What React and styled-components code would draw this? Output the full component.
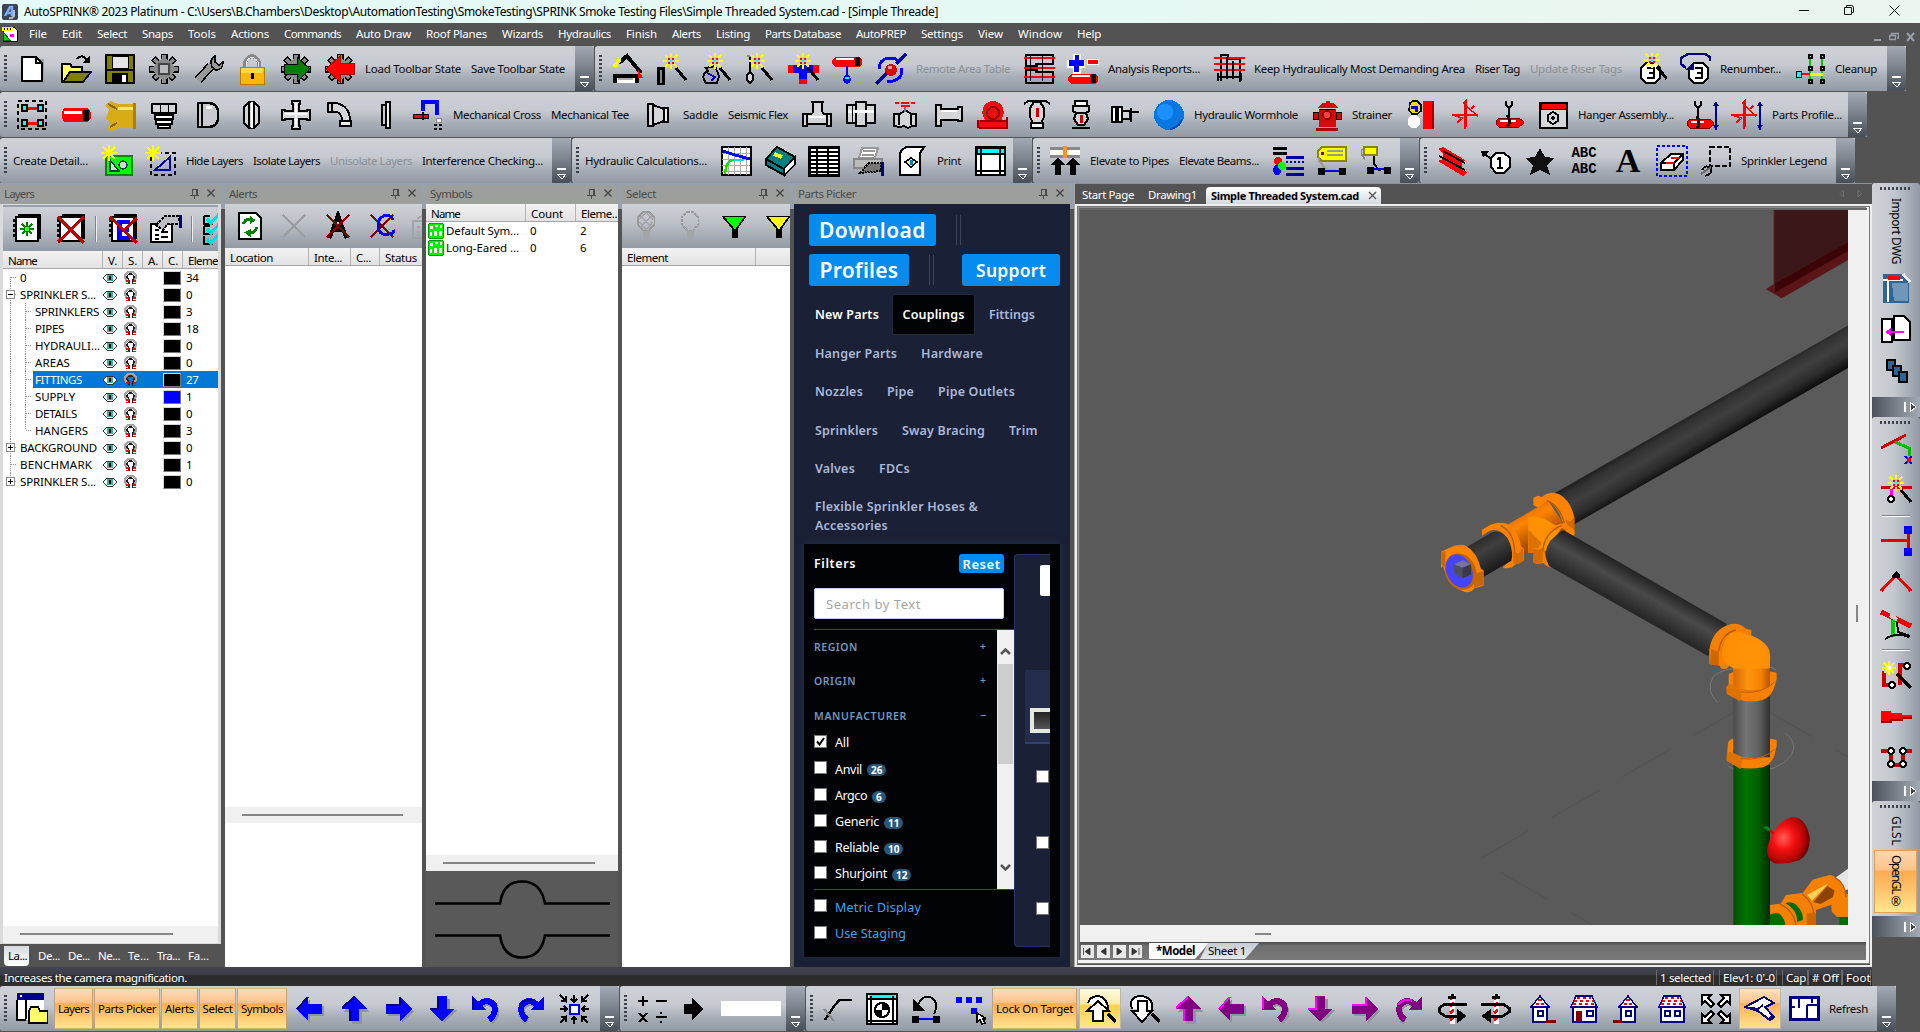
import React, { useLayoutEffect, useRef, useState } from 'react';
import styled, { createGlobalStyle, css } from 'styled-components';

const UI = "'Noto Sans', 'Open Sans', sans-serif";

const Global = createGlobalStyle`
  * { box-sizing: border-box; }
  html, body { margin: 0; padding: 0; }
  body { font: 11.5px/1 ${UI}; background: #535353; overflow: hidden; color: #000; }
`;

/* ---------- text with a known advance width ---------- */
const FitSpan = styled.span`
  display: inline-block;
  white-space: pre;
  flex: none;
  justify-self: start;
  align-self: ${(p) => (p.$top ? 'flex-start' : 'center')};
  line-height: 16px;
`;
function Fit({ w, vertical, top, children, className }) {
  const ref = useRef(null);
  const [spacing, setSpacing] = useState(0);
  useLayoutEffect(() => {
    const box = ref.current.getBoundingClientRect();
    const natural = vertical ? box.height : box.width;
    setSpacing((w - natural) / children.length);
  }, []);
  return <FitSpan ref={ref} $top={top} className={className} style={{ letterSpacing: spacing }}>{children}</FitSpan>;
}

/* ---------- icon drawings: [path, fill, stroke, stroke width] ---------- */
const K = '#000';
const G = '#c8cacf';
const BODY = '#d4d6da';
const star = (x, y) => [
  [`M${x} ${y - 8}v4M${x} ${y + 4}v4M${x - 8} ${y}h4M${x + 4} ${y}h4M${x - 6} ${y - 6}l3 3M${x + 3} ${y + 3}l3 3M${x + 6} ${y - 6}l-3 3M${x - 3} ${y + 3}l-3 3`, 'none', '#ff0', 2],
  [`M${x - 3} ${y - 3}h2v2h-2zM${x + 1} ${y - 3}h2v2h-2zM${x - 3} ${y + 1}h2v2h-2zM${x + 1} ${y + 1}h2v2h-2z`, 'red', '-'],
  [`M${x - 1} ${y - 1}h2v2h-2z`, '#0ff', '-'],
];
const rays = (x, y) => [[`M${x} ${y - 8}v16M${x - 8} ${y}h16M${x - 6} ${y - 6}l12 12M${x + 6} ${y - 6}l-12 12`, 'none', '#ff0', 2]];
const wand = (x, y) => [...star(x, y), [`M${x + 5} ${y + 7}L${x + 15} ${y + 19}`, 'none', K, 3]];
const gearBase = [
  ['M16 1v30M1 16h30M5.5 5.5l21 21M26.500 5.500l-21 21', 'none', K, 7],
  ['M16 2v28M2 16h28M6.500 6.500l19 19M25.500 6.500l-19 19', 'none', '#8b8b8b', 4],
  ['M16 6a10 10 0 1 0 .1 0z', '#8b8b8b', '-'],
];
const arrowSet = (fill, edge) => ({
  left: [['M4 18L16 6v7h14v10H16v8z', '#8f959d', '-'], ['M2 16L14 3v8h14v10H14v7z', fill, '-'], ['M3 16L14 4', 'none', edge, 2]],
  up: [['M18 6l14 13h-8v12h-10v-12h-8z', '#8f959d', '-'], ['M16 3l13 13h-8v12H11V16H3z', fill, '-'], ['M4 15L16 4M12 16v12', 'none', edge, 2]],
  right: [['M32 18L20 31v-8H6v-10h14v-6z', '#8f959d', '-'], ['M30 16L18 28v-7H4V11h14V3z', fill, '-'], ['M4 12h14V4', 'none', edge, 2]],
  down: [['M18 30l14-13h-8V6h-10v12h-8z', '#8f959d', '-'], ['M16 28l13-12h-8V3H11v13H3z', fill, '-'], ['M12 4v12H4', 'none', edge, 2]],
  ccw: [['M10 14q8-8 15 0q4 8-4 15', 'none', '#8f959d', 6], ['M9 12q8-8 15 0q3 9-5 15', 'none', fill, 6], ['M2 3v14h14z', fill, '-'], ['M3 4v12', 'none', edge, 2]],
  cw: [['M24 14q-8-8-15 0q-4 8 4 15', 'none', '#8f959d', 6], ['M23 12q-8-8-15 0q-3 9 5 15', 'none', fill, 6], ['M30 3v14H16z', fill, '-'], ['M6 12q6-8 14-4', 'none', edge, 2]],
});
const blue = arrowSet('#00f', '#000080');
const purple = arrowSet('#800080', '#f0f');

const sheet = [['M6 4h22v24H6z', '#fff', K, 2], ['M8 2h22v24', 'none', K, 2], ['M6 7H3M6 12H3M6 17H3M6 22H3', 'none', K, 3]];
const cross = (c) => [['M4 4l24 24M28 4L4 28', 'none', c, 3]];
const badge3 = [['M11 10h9l5 5v10l-5 5h-9l-5-5V15z', '#fff', K, 2], ['M12 15h7v10h-7m2-5h5', 'none', K, 2]];
const house = (front) => [
  front ? ['M3 14l5-11h16l5 11z', '#fff', '#000080', 1.5] : ['M7 14l9-11 9 11z', '#fff', '#000080', 1.5],
  front ? ['M9 5h14M6 8h20M5 11h22', 'none', 'red', 2, '3 3'] : ['M14 7h4M12 11h3m2 0h3', 'none', 'red', 2],
  front ? ['M5 14h23v15H5z', '#fff', '#000080', 2] : ['M9 14h14v15H9z', '#fff', '#000080', 2],
];
const pipeRed = (y) => [[`M4 ${y - 4}h24l3 3v4l-3 3H4l-3-3v-4z`, 'red', '-'], [`M5 ${y - 2}h18`, 'none', '#fff', 2], [`M24 ${y - 4}h5v9h-5z`, K, '-']];
const nodes = (y) => [[`M6 ${y}h20`, 'none', '#00f', 2], [`M2 ${y - 3}h7v7H2zM23 ${y - 3}h7v7h-7z`, K, '-']];
const funnel = (c) => [['M2 5h26L18 19v10h-4V19z', c, K, 2], ['M1 5h28', 'none', K, 2], ['M16 19v10', 'none', K, 4]];

const ICONS = {
  new: [['M8 6h20v24H8z', '#9a9fa6', '-'], ['M6 4h14l6 6v18H6z', '#fff', K, 2.5], ['M20 4v6h6']],
  open: [['M2 11h8l2 3h10v14H2z', '#ff6', K, 2], ['M10 19h21l-8 10H3z', '#808000', K, 2], ['M17 6q5-6 10 1', 'none', K, 2], ['M30 2v8h-8z', K, '-']],
  save: [['M2 2h28v28H2z', '#808000', K, 2.5], ['M8 3h16v12H8z', '#e4e4e4', K, 1], ['M8 20h16v10H8z', K, '-'], ['M18 22h4v7h-4z', '#fff', '-'], ['M3 17h26', 'none', K, 2]],
  gear: [...gearBase, ['M11 11h10v10H11z', '#b8babd', '#444', 2]],
  wrench: [['M6 27L19 13', 'none', K, 9], ['M6 27L20 12', 'none', '#999', 6], ['M20 14q-3-8 3-11v6l4 3 4-3q0 8-7 8z', '#999', K, 1.5]],
  lock: [['M9 16V9q7-12 14 0v7', 'none', '#888', 4], ['M10 14V9q6-9 12 0v5', 'none', '#ddd', 1], ['M4 14h24v17H4z', '#fbb80a', '#b97a00', 1], ['M5 15h22v5H5z', '#ffd84a', '-'], ['M16 20v6', 'none', K, 3]],
  ggear: [...gearBase, ['M4 11h13V4l13 12-13 13v-8H4z', '#008000', K, 1]],
  rgear: [...gearBase, ['M30 10H16V3L2 16l14 13v-8h14z', 'red', '#a00', 1]],
  crane: [['M4 30v-7h22v7', '#fff', K, 3.5], ['M7 26h15', 'none', '#aaa', 2], ['M8 10l8-7 14 17', 'none', K, 4], ['M3 14l6-8', 'none', '#ff0', 4], ['M27 16l5 9h-5z', 'red', '-']],
  wellbow: [['M3 15h5v16H3z', '#888', K, 3], ...wand(16, 8)],
  wturn: [['M7 30q-6-8 2-12l-2-3 9-2 4 10-2 7z', '#aaa', K, 2], ['M8 20l8 4-4 4', 'none', '#00a', 2], ...wand(16, 8)],
  wdrop: [['M7 2v18', 'none', K, 2], ['M7 19q7 6 0 11q-7-5 0-11z', BODY, K, 2], ['M4 3h6', 'none', '#888', 2], ...wand(14, 8)],
  wtee: [['M1 12h31v8H1z', 'red', '-'], ['M6 12h20v8H6z', '#00f', '-'], ['M12 18h8v8h-8z', '#00f', '-'], ['M12 26h8v5h-8z', 'red', '-'], ...wand(16, 8)],
  head: [...pipeRed(8), ['M16 13v9', 'none', '#00f', 2], ['M16 20q8 8 0 11q-8-3 0-11z', '#00f', '-'], ['M14 25h4', 'none', '#0ff', 2]],
  orbit: [['M31 1L21 11M1 31l12-12', 'none', '#00a', 4], ['M4 16q0-9 9-11h6l6 4M26 15q3 10-8 13h-6', 'none', '#00f', 3], ['M16 11a6 6 0 1 0 .1 0z', '#d00', '-'], ['M13 13h4v3h-4z', '#f99', '-']],
  stairs: [['M3 2h27v9H13v8h17v11H3V17h11v-4H3z', 'none', K, 2], ['M1 5h31M1 15h31M1 24h31', 'none', 'red', 2], ['M7 3v25M19 3v25', 'none', K, 1]],
  plusminus: [['M6 1h8v6h4v8h-4v6H6v-6H0V7h6z', '#fff', '-'], ['M8 2h4v5h5v6h-5v6H7v-6H2V7h6z', '#00f', '-'], ['M20 6h11v5H20z', 'red', '#fff', 1], ...pipeRed(25)],
  grate: [['M8 28V2h7v4h12v23', 'none', K, 2], ['M1 5h31M1 11h31M1 17h31', 'none', 'red', 2], ['M4 24h24M5 20v8M28 20v8M14 4v22M20 8v18', 'none', K, 2]],
  tag: [...badge3, ...wand(17, 7)],
  renum: [['M15 10h9l5 5v10l-5 5h-9l-5-5V15z', '#fff', K, 2], ['M16 15h7v10h-7m2-5h5', 'none', K, 2], ['M31 8V4L26 1H9L2 5v6l5 4', 'none', '#000080', 2.5], ['M15 8v9H7z', '#000080', '-']],
  cleanup: [['M16 5v22M28 5v22', 'none', '#0c0', 2], ['M4 21h12', 'none', 'red', 2], ['M16 21h13', 'none', '#ff0', 3], ['M2 18h5v6H2z', '#0ff', K, 1], ['M15 2h3v3h-3zM27 2h3v3h-3zM15 14h3v3h-3zM27 14h3v3h-3zM15 27h3v3h-3zM27 27h3v3h-3z', '#fff', K, 1.5]],

  riser: [['M2 2h28v28H2z', 'none', K, 2, '4 3'], ['M8 9h16M8 24h16', 'none', 'red', 3], ['M6 6h5v6H6zM22 6h5v6h-5zM6 21h5v6H6zM22 21h5v6h-5z', '#0ff', K, 1.5]],
  pipe: [['M4 9h22q5 0 5 7t-5 7H4q-4-7 0-14z', 'red', '-'], ['M4 13h18', 'none', '#fff', 3], ['M23 11h6v11h-6z', K, '-']],
  tee: [['M14 5h16v24H14q-3 4-10 2l1-8-3-3 3-9-4-5 6-4z', '#d9ab16', '-'], ['M14 9h15', 'none', '#ffe46a', 3], ['M30 4v26', 'none', '#ad8000', 3], ['M4 5l9 5M6 28l7-4', 'none', '#8c6900', 2]],
  plug: [['M4 5h24v9H4z', BODY, K, 2], ['M7 16h18v4H7zM8 21h16v4H8zM10 26h12v3H10z', '#fff', K, 2], ['M12 6v8M20 6v8', 'none', K, 1]],
  cap: [['M6 4h10q9 0 10 8v8q-1 8-10 8H6z', G, K, 2.5], ['M10 5v22', 'none', K, 1.5], ['M14 8h6', 'none', '#fff', 3]],
  union: [['M13 3h5l5 5v16l-5 5h-5l-5-5V8z', BODY, K, 2], ['M13 2v28M18 2v28', 'none', K, 1.5], ['M16 3v26', 'none', '#fff', 2]],
  cross: [['M12 2h8v3h-1v7h8v-1h3v10h-3v-1h-8v7h1v3h-8v-3h1v-7H5v1H2V11h3v1h8V5h-1z', BODY, K, 2], ['M16 4v24M5 15h22', 'none', '#fff', 2]],
  elbow: [['M4 4h8q14 3 14 18h-8q0-9-7-9H4z', BODY, K, 2], ['M16 22h11v5H16z', '#eee', K, 2], ['M8 3v10', 'none', K, 1.5]],
  flange: [['M14 6h4v20h-4z', G, K, 2], ['M18 3h4v26h-4z', '#eee', K, 2]],
  uturn: [['M11 12V3h14v13', 'none', '#00f', 4], ['M1 15h15v4H1z', 'red', K, 1], ['M11 13v8', 'none', K, 2], ['M24 19h5v4h-5z', '#eee', '#888', 1], ['M22 26h8M22 30h8', 'none', K, 2, '3 2']],
  reducer: [['M6 5h5v22H6z', BODY, K, 2], ['M11 6l11 4v12l-11 4z', BODY, K, 2], ['M22 9h4v14h-4z', '#eee', K, 2]],
  teefit: [['M2 15h8q2 0 2-5V3h9v7q0 5 3 5h6v12h-4v-2H6v2H2z', BODY, K, 2], ['M10 3h13M6 15v10M26 15v10', 'none', K, 2], ['M8 18h16', 'none', '#fff', 2]],
  coupling: [['M2 6h9v18H2zM21 6h9v18h-9z', BODY, K, 2], ['M11 3h10v24H11z', BODY, K, 2], ['M3 12h26', 'none', '#fff', 3], ['M7 7v17', 'none', K, 1]],
  valve: [['M5 15h6l4-3h3l4 3h5v12h-4l-4 2-4-2-4 1-6-1z', BODY, K, 2], ['M16 6v7', 'none', '#777', 2], ['M6 4h4m2 0h8m2 0h4', 'none', 'red', 2], ['M12 7h9', 'none', 'red', 2], ['M10 16v10M22 16v10', 'none', K, 1.5]],
  nipple: [['M3 6h5v4h17V8h4v14h-4v-1H8v6H3z', BODY, K, 2], ['M8 12h16', 'none', '#fff', 2]],
  pump: [['M7 6q9-8 18 0l2 8-3 8h6v7H1v-8h7l-3-7z', '#ea1010', '-'], ['M16 8a6 6 0 1 0 .1 0z', 'none', '#900', 2], ['M2 29h28M3 22h26M1 21v8M30 18v12', 'none', '#900', 2]],
  pendent: [['M3 5l4-3h18l4 3', 'none', K, 2], ['M13 3h6l4 6v9l-3 6h-8l-3-6V9z', BODY, K, 2], ['M10 24h12v5H10z', '#fff', K, 2], ['M16 9v9', 'none', '#c00', 3]],
  upright: [['M10 2h12v5H10z', '#fff', K, 2], ['M8 7h16v5l-3 2h-10l-3-2z', BODY, K, 2], ['M11 14h10l2 6-4 6h-6l-4-6z', BODY, K, 2], ['M16 16v8', 'none', '#c00', 3], ['M7 29h18', 'none', K, 2]],
  sidewall: [['M3 8h4v15H3zM9 8h4v15H9z', '#fff', K, 2], ['M13 12h8v8h-8z', BODY, K, 2], ['M21 13h9M22 9v14', 'none', K, 2]],
  sphere: [['M16 1a15 15 0 1 0 .1 0z', '#0878e0', '-'], ['M12 5a8 8 0 1 0 .1 0z', '#1c90ff', '-'], ['M29 20q-4 9-12 10', 'none', '#0050b0', 2]],
  hydrant: [['M11 4h4V2h4v2h4l4 5H6zM8 10h17v18H8z', '#d80808', '-'], ['M2 13h5v7H2zM25 13h5v7h-5z', '#d80808', K, 1], ['M16 12a4 4 0 1 0 .1 0z', '#ff4040', '#800', 2], ['M5 30h22', 'none', '#a00', 3], ['M8 10h16', 'none', K, 1]],
  riserv: [['M18 2h9v28h-9z', 'red', '-'], ['M28 2v28', 'none', '#900', 2], ['M5 4l3-2h4l4 4v6l-4 3H7l-3-4z', '#e8e000', K, 1.5], ['M6 8h5v5', 'none', '#00f', 3], ['M3 19l4-3h5l3 4v6l-4 3H6l-3-3z', '#fff', '-']],
  axes: [['M16 3v27M3 16h26', 'none', 'red', 2], ['M3 16l11 3M18 8l11 9M14 5l3-3v26', 'none', 'red', 1.5], ['M8 24l4-4M22 10l3-3', 'none', 'red', 1.5]],
  hanger: [['M13 2v4l3 3 3-3V2M16 9v12', 'none', K, 2], ['M6 19h20l4 3v3l-4 3H6l-3-3v-3z', 'red', '#700', 1], ['M7 22h16', 'none', '#fff', 2], ['M14 16q5 7 0 12', 'none', K, 3]],
  detail: [['M3 4h27v25H3z', BODY, K, 2], ['M4 4h25v6H4z', 'red', K, 1], ['M16 13l5 3v6l-5 3-5-3v-6zM16 17v4M14 19h4', 'none', K, 2]],
  hangerdim: [['M8 2v4l3 3 3-3V2M11 9v12', 'none', K, 2], ['M3 20h20l3 3v3l-3 3H3l-3-3v-3z', 'red', '#700', 1], ['M4 23h13', 'none', '#fff', 2], ['M10 17q4 7 0 12', 'none', K, 3], ['M29 3v28', 'none', '#0000a0', 2], ['M26 7l3-5 3 5zM26 26l3 5 3-5z', '#0000a0', '-']],
  axesdim: [['M13 3v27M0 16h26', 'none', 'red', 2], ['M0 16l11 3M15 8l10 9M11 5l3-3v26', 'none', 'red', 1.5], ['M5 24l4-4M19 10l3-3', 'none', 'red', 1.5], ['M29 3v28', 'none', '#0000a0', 2], ['M26 7l3-5 3 5zM26 26l3 5 3-5z', '#0000a0', '-']],

  detnew: [['M5 11h26v19H5z', '#0f0', '#080', 2], ['M9 15v11h9zM22 16a4 4 0 1 0 .1 0z', BODY, '#044', 1.5], ...rays(8, 8)],
  detsel: [['M6 8h24v22H6z', 'none', K, 2, '4 3'], ['M10 25l15-13v13z', 'none', '#0000a0', 2], ...rays(8, 8)],
  graph: [['M2 2h29v28H2z', '#fff', K, 2], ['M8 2v28M14 2v28M20 2v28M26 2v28M2 8h28M2 14h28M2 20h28M2 26h28', 'none', '#aaa', 1], ['M3 6l12 4 15 4', 'none', '#00f', 3], ['M5 29q1-14 9-14', 'none', '#0e0', 2.5], ['M14 15h10', 'none', '#0dd', 2]],
  book: [['M2 14L13 2l18 10-11 12z', '#008080', K, 2], ['M20 24l11-12v7L21 30z', '#fff', K, 1.5], ['M2 14v6l18 10v-6z', '#008080', K, 2], ['M10 9l8 3', 'none', '#ff0', 4]],
  table: [['M1 2h30v28H1z', '#fff', K, 3], ['M2 7h28M2 11h28M2 15h28M2 19h28M2 23h28M2 27h28', 'none', K, 2], ['M9 2v28M20 2v28', 'none', K, 2]],
  printer: [['M10 3h16l-3 10H7z', '#fff', '#999', 2], ['M11 6h12M10 10h12', 'none', '#999', 1.5], ['M2 14h28v9H2z', '#bbb', '#888', 2], ['M8 28l9-10h12v8z', '#777', K, 2, '2 1'], ['M29 17h3v14h-3z', '#000080', '-']],
  eyepage: [['M6 5l4-3h18l-4 6v22H4V8z', '#fff', K, 2], ['M9 17l6-4 6 4-6 5z', '#ff8', K, 1.5], ['M15 15v5', 'none', '#088', 3]],
  layout: [['M2 2h29v28H2z', '#fff', K, 2.5], ['M3 3h27v5H3z', '#0ff', K, 1], ['M7 3v27M26 3v27M3 9h27M3 26h27', 'none', K, 2]],
  elevate: [['M1 3h30', 'none', '#888', 3], ['M1 7h30', 'none', '#fff', 5], ['M1 11h30', 'none', '#888', 3], ['M16 1v12', 'none', '#ff9020', 4], ['M9 12l7 8h-4v10H6V20H2zM24 12l7 8h-4v10h-6V20h-4z', K, '-']],
  legend: [['M1 3h14M1 8h14', 'none', K, 3], ['M6 12a4 4 0 1 0 .1 0z', 'red', '-'], ['M5 20a4 5 0 1 0 .1 0z', '#00f', '-'], ['M10 17a4 4 0 1 0 .1 0z', '#0f0', '-'], ['M14 12h18M14 23h18M14 29h18', 'none', '#0000a0', 3], ['M14 17h18', 'none', '#0000a0', 2, '2 2']],
  label: [['M6 2h24v14H6l-4-4V6z', '#ff0', '#880', 1.5], ['M11 6h16M11 10h16', 'none', '#999', 2], ['M5 8h3', 'none', '#800', 3], ['M3 12v4l7 8', 'none', '#999', 2], ...nodes(26)],
  label2: [['M4 2h13v8H4z', '#ff0', '#880', 1.5], ['M14 11v8l6 7', 'none', K, 2], ['M2 4q-2 6 3 10', 'none', '#888', 1.5], ['M8 24h22', 'none', '#00f', 2], ['M7 22h7v7H7zM24 22h7v7h-7z', K, '-']],
  beam: [['M2 4l5-2 22 13-3 4v6l5 2-4 4L2 16l5-2v-6z', 'red', '-'], ['M3 11l26 14M7 6l22 12', 'none', K, 2]],
  num1: [['M16 8h8l6 5v9l-6 6h-8l-5-6v-9z', '#fff', K, 2], ['M17 14l3-1v10m-3 0h6', 'none', K, 2], ['M12 14L4 9', 'none', K, 2], ['M1 6h8l-6 6z', K, '-']],
  star: [['M16 3l5 9 10 1-8 7 3 10-10-5-10 5 3-10-8-7 10-1z', '#111', '-']],
  slab: [['M1 1h30v30H1z', 'none', '#00f', 2, '3 2'], ['M5 18l10-9h12v6L18 25H5z', '#fff', K, 2], ['M5 18h13l9-9M18 18v7', 'none', K, 2], ['M10 18h8M15 13h8', 'none', 'red', 2]],
  cloud: [['M10 2h20v19H10z', 'none', K, 2, '5 2'], ['M2 25q3-6 9-2 2 6-6 8', 'none', K, 2], ['M1 29l10-7', 'none', '#666', 2]],

  layNew: [...sheet, ['M17 9v14M10 16h14M12 11l10 10M22 11L12 21', 'none', '#008000', 1.5], ['M15 14h4v4h-4z', '#3f3', '-']],
  layDel: [...sheet, ['M4 4l26 26M30 4L4 29', 'none', '#c00000', 3]],
  layE: [['M6 4h22v24H6z', '#fff', K, 2], ['M8 2h22v24', 'none', K, 2], ['M6 7H3M6 12H3M6 17H3M6 22H3', 'none', K, 3], ['M11 7h13v4h-8v4h7v4h-7v4h8v4H11z', '#00f', '-'], ['M4 4l27 26M31 5L17 18', 'none', '#c00000', 3]],
  props: [['M1 11h21v18H1z', '#fff', K, 2], ['M5 17h4M5 22h4M5 26h4M11 19h7M11 24h7', 'none', K, 1.5], ['M6 12l9-9h13l2 8H18l-5 6z', '#bcbec2', K, 2, '3 1'], ['M29 2h3v13h-3z', '#000080', '-']],
  checks: [['M2 3h6M2 3v8h9M2 13h6M2 13v8h9M2 23v8h9', 'none', K, 2], ['M5 6l4 4 8-9M5 16l4 4 8-9M5 26l4 4 8-9', 'none', '#0dd', 3]],
  refresh: [['M4 2h18l6 6v22H4z', '#fff', K, 2.5], ['M9 14q1-6 9-5M23 17q-1 7-8 6', 'none', '#008000', 3], ['M16 5l6 5-6 4zM17 19l-7 4 7 5z', '#008000', '-']],
  xgrey: cross('#9a9da2'),
  xa: [['M7 29L16 4l9 25M10 20h13', 'none', K, 4], ...cross('#800000')],
  xc: [...cross('#800000'), ['M27 10q0-7-9-5-7 3-6 12t10 8 6-5', 'none', '#00f', 3]],
  propsGrey: [['M2 11h21v18H2z', 'none', '#a0a3a8', 2], ['M6 17h4M6 22h4M6 26h4M12 19h7M12 24h7M6 8l10-5h10', 'none', '#a0a3a8', 2]],
  bulb1: [['M12 1h6l6 6v7l-6 7h-6l-6-7V7z', 'none', '#999', 2], ['M9 5l12 12M21 5L9 17M15 2l7 7M15 2L8 9M8 12l7 8 7-8', 'none', '#a2a4a8', 1.5], ['M12 21h7v8l-3 2-4-2z', '#a2a4a8', '-']],
  bulb2: [['M12 1h6l6 6v7l-6 7h-6l-6-7V7z', 'none', '#999', 2, '3 1'], ['M12 21h7v8l-3 2-4-2z', '#a2a4a8', '-']],
  funG: funnel('#0f0'),
  funY: funnel('#ff0'),

  win: [['M1 1h27v26H1z', '#fff', '-'], ['M1 7v20h9', 'none', K, 2], ['M10 7v19', 'none', K, 2], ['M1 0h27v7H1z', '#000080', '-'], ['M4 3h2', 'none', '#fff', 2], ['M15 14h7l2 4h8v12H13V18z', '#ff6', K, 1.5]],
  center: [['M12 12h9v9h-9z', '#fff', '#00f', 2], ['M16 2v8M16 23v8M2 16h7M23 16h8', 'none', K, 2], ['M13 6l3 3 3-3M13 27l3-3 3 3M6 13l3 3-3 3M27 13l-3 3 3 3', 'none', K, 2], ['M2 2l6 6V3M8 8H3M30 2l-6 6V3M24 8h5M2 30l6-6v5M8 24H3M30 30l-6-6v5M24 24h5', 'none', K, 2]],
  calc: [['M2 8h10M7 3v10M20 8h11M3 20l8 9M11 20l-8 9M20 24h11M25 19v2M25 28v2', 'none', K, 2]],
  go: [['M4 11h8V5l11 11-11 11v-6H4z', K, '-']],
  curve: [['M3 27q12-19 15-20h12', 'none', K, 2.5], ['M2 16l10 12', 'none', '#888', 2]],
  target: [['M1 1h30v30H1z', '#fff', K, 2.5], ['M3 3h26', 'none', '#0ff', 3], ['M5 3v28M27 3v28M2 6h28M2 28h28', 'none', K, 1.5], ['M16 10a7 7 0 1 0 .1 0z', 'none', K, 2], ['M16 10v7h7a7 7 0 0 0-7-7zM16 17H9a7 7 0 0 0 7 7z', K, '-']],
  back: [['M8 12q4-10 12-8 10 5 4 17', 'none', K, 2], ['M3 6v12h12z', K, '-'], ...nodes(26)],
  pick: [['M2 4h6v6H2zM12 4h6v6h-6zM22 4h6v6h-6zM17 15h6v6h-6z', '#00f', '-'], ['M23 20v9l3-2 2 4 3-1-2-4h4z', '#fff', K, 1.5]],
  zin: [['M4 10q3-9 14-6 8 6 5 14', '#fff', K, 2], ['M24 21l8 8', 'none', K, 4], ['M14 8L3 18h6v10h10V18h6z', '#fff', K, 2]],
  zout: [['M4 16Q0 3 14 3q12 2 10 15', '#fff', K, 2], ['M24 21l8 8', 'none', K, 4], ['M10 8v10H4l10 11 10-11h-5V8z', '#fff', K, 2]],
  rotl: [['M16 1v30', 'none', '#fff', 5], ['M14 6l4-3m-4 10l4-3m-4 10l4-3m-4 10l4-3', 'none', 'red', 3], ['M31 11H9l-6 4v4l6 4h14', 'none', K, 3], ['M21 16v14l10-7z', K, '-'], ['M12 4h8M16 1v5', 'none', K, 3]],
  rotr: [['M16 1v30', 'none', '#fff', 5], ['M14 6l4-3m-4 10l4-3m-4 10l4-3m-4 10l4-3', 'none', 'red', 3], ['M1 11h22l6 4v4l-6 4H9', 'none', K, 3], ['M11 16v14L1 23z', K, '-'], ['M12 4h8M16 1v5', 'none', K, 3]],
  h1: [...house(false), ['M14 18h5v5h-5z', '#fff', '#000080', 2], ['M22 28h10', 'none', '#800000', 3]],
  h2: [...house(true), ['M8 18h6v11H8z', '#800000', '-'], ['M19 18h6v5h-6z', '#fff', '#000080', 2]],
  h3: [...house(false), ['M14 18h5v5h-5z', '#fff', '#000080', 2], ['M1 28h9', 'none', '#800000', 3]],
  h4: [...house(true), ['M9 18h5v5H9zM19 18h5v5h-5z', '#fff', '#000080', 2]],
  extents: [['M2 2h9l-3 3 6 6-3 3-6-6-3 3zM30 2h-9l3 3-6 6 3 3 6-6 3 3zM2 30h9l-3-3 6-6-3-3-6 6-3-3zM30 30h-9l3-3-6-6 3-3 6 6 3-3z', '#fff', K, 2]],
  view3d: [['M1 14L20 4l10 6-9 4 8 9-5 3-10-8z', '#fff', '#000080', 2], ['M1 14l13 2 5-4M14 18l12 9 5-3', 'none', '#000080', 2]],
  plan: [['M2 4h28v22H2z', '#fff', '#000080', 3], ['M11 4v11M2 14h5M19 12h11M19 12v14M24 4v6', 'none', '#000080', 2]],

  dwg: [['M3 2h18l8 8v21H3z', '#2d6596', '-'], ['M12 11h16v18H14z', '#7096b8', '-'], ['M8 8v22M3 8h20', 'none', '#fff', 2], ['M8 4h12v4H8z', 'red', '-'], ['M23 2l7 8', 'none', '#eee', 3]],
  copy: [['M2 5h10v23H2z', '#fff', K, 2], ['M14 2h10l6 6v18H14z', '#fff', K, 2], ['M6 18h18', 'none', '#f0f', 2], ['M5 18l6-4v8z', '#f0f', '-']],
  boxes: [['M7 4h8v10H7z', '#2d6596', K, 2], ['M13 10h8v10h-8z', '#2d6596', K, 2], ['M19 16h8v10h-8z', '#2d6596', K, 2]],
  v1: [['M1 15L26 2', 'none', '#c00', 3], ['M15 9l14 6v8', 'none', '#0b0', 3], ['M25 23l7 8M32 23l-7 8', 'none', '#00f', 2], ['M27 25h4v4h-4z', 'red', '-']],
  v2: [['M1 12h31', 'none', '#c00', 3], ['M11 13v8', 'none', '#f0f', 3], ['M11 21a3 3 0 1 0 .1 0z', '#fff', K, 2], ...wand(16, 8)],
  v3: [['M1 15h27M28 4v22', 'none', '#d00', 3], ['M24 1h8v8h-8zM24 23h8v8h-8z', '#00f', '-']],
  v4: [['M1 24L16 8l15 16', 'none', '#e00', 3], ['M12 8l4-4 4 4v3h-8z', K, '-']],
  v5: [['M1 3l30 14', 'none', '#e00', 5], ['M10 6l7 5', 'none', '#ccc', 4], ['M13 11v17', 'none', '#0c0', 4], ['M17 13l1 10 12 4M5 30q10-7 24-2', 'none', K, 2]],
  v6: [['M4 12v14h6M20 26V6h7', 'none', '#c00', 4], ['M12 23a3 3 0 1 0 .1 0zM27 4a3 3 0 1 0 .1 0z', '#fff', K, 2], ['M17 15l14 14', 'none', K, 4], ['M9 2v14M2 9h14M4 4l10 10M14 4L4 14', 'none', '#ff0', 2], ['M7 7h4v4H7z', '#fff', '-']],
  v7: [['M1 10h10v2h11v2h10v3H22v2H11v2H1z', '#f00', '-'], ['M1 21h10v-2h11v-2h10', 'none', '#900', 2]],
  v8: [['M1 8h10v14h12V8h9', 'none', '#c00', 4], ['M11 5a3 3 0 1 0 .1 0zM23 5a3 3 0 1 0 .1 0zM11 18a3 3 0 1 0 .1 0zM23 18a3 3 0 1 0 .1 0z', '#fff', K, 2]],
  ...Object.fromEntries(Object.entries(blue).map(([k, v]) => ['b_' + k, v])),
  ...Object.fromEntries(Object.entries(purple).map(([k, v]) => ['p_' + k, v])),
};

const Svg = styled.svg`
  display: block;
  flex: none;
`;
function Icon({ name, size = 32 }) {
  return (
    <Svg width={size} height={size} viewBox="0 0 32 32" shapeRendering="crispEdges">
      {ICONS[name].map(([d, fill = 'none', stroke = K, width = 2, dash], i) => (
        <path key={i} d={d} fill={fill} stroke={stroke === '-' ? 'none' : stroke} strokeWidth={width} strokeDasharray={dash} />
      ))}
    </Svg>
  );
}

/* ---------- frame ---------- */
const Shell = styled.div`
  width: 1920px;
  height: 1032px;
  display: grid;
  grid-template-rows: 23px 23px 137px 784px 19px 46px;
  background: #535353;
  overflow: hidden;
`;
const TitleBar = styled.header`
  display: flex;
  align-items: center;
  padding: 0 20px 0 2px;
  background: linear-gradient(90deg, #e4faf6, #e6f8f3 60%, #ecf5ef);
  font-size: 12px;
  svg.logo { margin-right: 6px; }
`;
const Spacer = styled.div`flex: 1;`;
const WinButtons = styled.div`
  display: flex;
  gap: 35px;
  align-items: center;
  padding-bottom: 3px;
`;
const MenuBar = styled.nav`
  display: flex;
  align-items: center;
  gap: 15px;
  padding: 0 5px 1px 2px;
  color: #fff;
  svg { margin-right: -4px; }
`;
const MdiButtons = styled.div`
  display: flex;
  gap: 7px;
  margin-top: 6px;
  svg { margin: 0; }
`;

/* ---------- toolbars ---------- */
const Rows = styled.div`
  display: grid;
  grid-template-rows: repeat(3, 45px);
  row-gap: 1px;
  background: #535353;
`;
const Row = styled.div`
  display: flex;
  gap: 1px;
  height: ${(p) => p.$h ?? 45}px;
`;
const Bar = styled.div`
  display: flex;
  align-items: center;
  width: ${(p) => p.$w}px;
  height: 100%;
  flex: none;
  border-radius: 3px 0 0 2px;
  background: linear-gradient(#ced1d6, #c6c9cf 42%, #a9afb8 68%, #929aa5);
`;
const BarBody = styled.div`
  display: flex;
  align-items: center;
  flex: 1;
  min-width: 0;
`;
const Grip = styled.div`
  width: 3px;
  height: 28px;
  margin: 0 3px 0 4px;
  flex: none;
  background: repeating-linear-gradient(#3d434c 0 2px, transparent 2px 4px);
`;
const Overflow = styled.div`
  width: 19px;
  height: 100%;
  flex: none;
  display: flex;
  align-items: flex-end;
  justify-content: center;
  padding-bottom: 1px;
  border-radius: 0 3px 3px 0;
  background: linear-gradient(#a3a9b4, #7e858f 45%, #484e58);
`;
const IconCell = styled.div`
  width: 44px;
  height: 41px;
  flex: none;
  display: flex;
  align-items: center;
  justify-content: center;
  ${(p) => p.$on && css`
    width: 42px;
    margin: 0 1px;
    border: 1px solid #b9b7ae;
    background: ${p.$on === 'hot'
      ? 'linear-gradient(#fffbe0, #ffeaa8 38%, #ffd048 42%, #ffe694)'
      : 'linear-gradient(#fde0bd, #fdc689 34%, #fdb058 38%, #fee18c)'};
  `}
`;
const TextCell = styled.div`
  display: flex;
  padding: 0 7px 0 3px;
  color: ${(p) => (p.$off ? '#8b9097' : '#08090b')};
`;
const Toggle = styled.div`
  width: ${(p) => p.$w}px;
  height: 41px;
  margin-right: 1px;
  flex: none;
  display: flex;
  align-items: center;
  justify-content: center;
  border: 1px solid #c39a62;
  border-color: #d6b48a #c9a06a #cfb872 #b9a38a;
  background: linear-gradient(#fcdcbb, #fdc48a 34%, #feac56 38%, #fdc069 60%, #ffe58e);
`;
const Glyphs = styled.div`
  width: 44px;
  flex: none;
  text-align: center;
  font: bold ${(p) => p.$size}px/${(p) => p.$lh}px 'Liberation Serif', serif;
  font-family: ${(p) => (p.$mono ? "'Liberation Mono', monospace" : "'Liberation Serif', serif")};
`;
const GlyphLine = styled.div`
  height: ${(p) => p.$h}px;
`;
const Field = styled.div`
  width: 60px;
  height: 15px;
  margin-left: 3px;
  background: #fff;
`;

const More = () => (
  <Overflow>
    <Svg width="11" height="14" viewBox="0 0 11 14" shapeRendering="crispEdges">
      <path d="M1 1h9" stroke="#fff" strokeWidth="1.500" />
      <path d="M1 6h9l-4 5z" fill="#555b64" stroke="#fff" />
    </Svg>
  </Overflow>
);

function Item({ it }) {
  if (it === 'ABC') return <Glyphs $mono $size={14} $lh={16}><GlyphLine $h={16}>ABC</GlyphLine><GlyphLine $h={16}>ABC</GlyphLine></Glyphs>;
  if (it === 'A') return <Glyphs $size={34} $lh={34}>A</Glyphs>;
  if (it === 'field') return <Field />;
  if (typeof it === 'string') {
    const [name, on] = it.split('!');
    return <IconCell $on={on}><Icon name={name} /></IconCell>;
  }
  const [label, w, mode, box] = it;
  if (mode === 'on') return <Toggle $w={box}><Fit w={w}>{label}</Fit></Toggle>;
  return <TextCell $off={mode === 'off'}><Fit w={w}>{label}</Fit></TextCell>;
}
const Toolbar = ({ w, items }) => (
  <Bar $w={w}>
    <BarBody><Grip />{items.map((it, i) => <Item key={i} it={it} />)}</BarBody>
    <More />
  </Bar>
);

const ROW1 = [
  [594, ['new', 'open', 'save', 'gear', 'wrench', 'lock', 'ggear', 'rgear', ['Load Toolbar State', 96], ['Save Toolbar State', 94]]],
  [1311, ['crane', 'wellbow', 'wturn', 'wdrop', 'wtee', 'head', 'orbit', ['Remote Area Table', 94, 'off'], 'stairs', 'plusminus', ['Analysis Reports...', 92], 'grate', ['Keep Hydraulically Most Demanding Area', 211], ['Riser Tag', 45], ['Update Riser Tags', 92, 'off'], 'tag', 'renum', ['Renumber...', 61], 'cleanup', ['Cleanup', 42]]],
];
const ROW2 = [
  [1867, ['riser', 'pipe', 'tee', 'plug', 'cap', 'union', 'cross', 'elbow', 'flange', 'uturn', ['Mechanical Cross', 88], ['Mechanical Tee', 78], 'reducer', ['Saddle', 35], ['Seismic Flex', 60], 'teefit', 'coupling', 'valve', 'nipple', 'pump', 'pendent', 'upright', 'sidewall', 'sphere', ['Hydraulic Wormhole', 104], 'hydrant', ['Strainer', 40], 'riserv', 'axes', 'hanger', 'detail', ['Hanger Assembly...', 96], 'hangerdim', 'axesdim', ['Parts Profile...', 70]]],
];
const ROW3 = [
  [571, [['Create Detail...', 75], 'detnew', 'detsel', ['Hide Layers', 57], ['Isolate Layers', 67], ['Unisolate Layers', 82, 'off'], ['Interference Checking...', 121]]],
  [460, [['Hydraulic Calculations...', 122], 'graph', 'book', 'table', 'printer', 'eyepage', ['Print', 24], 'layout']],
  [386, ['elevate', ['Elevate to Pipes', 79], ['Elevate Beams...', 80], 'legend', 'label', 'label2']],
  [435, ['beam', 'num1', 'star', 'ABC', 'A', 'slab', 'cloud', ['Sprinkler Legend', 86]]],
];
const BOTTOM = [
  [619, ['win', ['Layers', 31, 'on', 39], ['Parts Picker', 58, 'on', 66], ['Alerts', 29, 'on', 37], ['Select', 30, 'on', 37], ['Symbols', 42, 'on', 50], 'b_left', 'b_up', 'b_right', 'b_down', 'b_ccw', 'b_cw', 'center']],
  [185, ['calc', 'go', 'field']],
  [1090, ['curve', 'target', 'back', 'pick', ['Lock On Target', 77, 'on', 85], 'zin!hot', 'zout', 'p_up', 'p_left', 'p_ccw', 'p_down', 'p_right', 'p_cw', 'rotl', 'rotr', 'h1', 'h2', 'h3', 'h4', 'extents', 'view3d!on', 'plan', ['Refresh', 39]]],
];

/* ---------- dock panels ---------- */
const Middle = styled.main`
  display: flex;
  gap: 4px;
  background: linear-gradient(#98a0ab 0 26px, #535353 26px);
`;
const Dock = styled.section`
  width: ${(p) => p.$w}px;
  padding-top: 2px;
  flex: none;
  display: flex;
  flex-direction: column;
  overflow: hidden;
`;
const DockTitle = styled.div`
  height: 19px;
  flex: none;
  display: flex;
  align-items: center;
  padding: 0 5px 2px 4px;
  background: #9d9f9d;
  color: #4a4b4a;
`;
const Pins = styled.div`
  margin-left: auto;
  display: flex;
  gap: 7px;
`;
const Title = ({ name, w }) => (
  <DockTitle>
    <Fit w={w}>{name}</Fit>
    <Pins>
      <Svg width="9" height="11" viewBox="0 0 9 11" shapeRendering="crispEdges"><path d="M2 1.500h5v5M2.500 1v6M6 1v6M0 7h9M4.500 7v4" fill="none" stroke="#4a4a4a" /></Svg>
      <Svg width="10" height="10" viewBox="0 0 10 10"><path d="M1.500 1.500l7 7M8.500 1.500l-7 7" stroke="#444" strokeWidth="1.400" /></Svg>
    </Pins>
  </DockTitle>
);
const MiniBar = styled.div`
  height: 44px;
  flex: none;
  display: flex;
  align-items: center;
  overflow: hidden;
  padding-left: ${(p) => p.$pad ?? 3}px;
  background: linear-gradient(#ced1d6, #bbbfc6 45%, #929aa5);
`;
const MiniSep = styled.div`
  width: 2px;
  height: 26px;
  margin: 0 3px 0 3px;
  flex: none;
  background: linear-gradient(90deg, #7d848e 50%, #eceef1 50%);
`;
const Header = styled.div`
  height: 18px;
  flex: none;
  display: flex;
  background: linear-gradient(#f2f2f2, #e2e2e2);
  border-bottom: 1px solid #a5a5a5;
  overflow: hidden;
`;
const Col = styled.div`
  width: ${(p) => p.$w}px;
  height: 18px;
  flex: none;
  padding: 2px 0 0 ${(p) => p.$pad ?? 5}px;
  border-right: 1px solid #b3b3b3;
  white-space: nowrap;
  line-height: 16px;
`;
const White = styled.div`
  flex: ${(p) => (p.$h ? 'none' : 1)};
  height: ${(p) => (p.$h ? p.$h + 'px' : 'auto')};
  background: #fff;
  overflow: hidden;
`;
const HScroll = styled.div`
  height: ${(p) => p.$h ?? 16}px;
  flex: none;
  background: #f0f0f0;
  padding: 7px 0 0 ${(p) => p.$x}px;
  &::after { content: ''; display: block; width: ${(p) => p.$w}px; height: 2px; background: #868686; }
`;
const LayersBox = styled.div`
  height: 740px;
  flex: none;
  display: flex;
  flex-direction: column;
  padding: 2px 0 0;
  border: solid #d9dadb;
  border-width: 1px 3px 1px 3px;
`;
const LayerRow = styled.div`
  height: 17px;
  display: grid;
  grid-template-columns: ${(p) => p.$indent}px ${(p) => 99 - p.$indent}px 21px 40px 23px 1fr;
  align-items: center;
  color: ${(p) => (p.$sel ? '#fff' : '#000')};
  background: ${(p) => (p.$sel ? 'linear-gradient(90deg, #fff 30px, #0078d7 30px)' : '#fff')};
`;
const Swatch = styled.div`
  width: 18px;
  height: 14px;
  background: ${(p) => p.$c};
  border: 1px solid #9b9b9b;
  border-color: #d8d8d8 #777 #777 #d8d8d8;
`;
const Tree = styled.svg`
  display: block;
  width: ${(p) => p.width}px;
`;
const Eye = () => (
  <Svg width="16" height="12" viewBox="0 0 16 12" shapeRendering="crispEdges">
    <path d="M1 6l4-4h6l4 4-4 4H5z" fill="#fff" stroke="#333" />
    <path d="M5 3h6v6H5z" fill="#3fae9a" /><path d="M7 4h2v4H7z" fill="#000" />
  </Svg>
);
const Magnet = () => (
  <Svg width="16" height="14" viewBox="0 0 16 14" shapeRendering="crispEdges">
    <path d="M4 10L2 7V4l3-3h5l3 3v3l-2 3" fill="none" stroke="#a4a4a4" strokeWidth="2" />
    <path d="M6 13V9L4 6.500V5l2-2h3l2 2v1.500L9.500 9v4" fill="none" stroke="#1c1c1c" strokeWidth="1.300" />
    <path d="M3 10h3M3 12.500h3M9.500 10h3M9.500 12.500h3" stroke="#e01010" strokeWidth="1.200" />
  </Svg>
);
const LAYERS = [
  ['0', 6, '34', 0], ['SPRINKLER S...', 76, '0', 0, '-'], ['SPRINKLERS', 64, '3', 1], ['PIPES', 29, '18', 1], ['HYDRAULI...', 65, '0', 1],
  ['AREAS', 35, '0', 1], ['FITTINGS', 47, '27', 1], ['SUPPLY', 40, '1', 1], ['DETAILS', 42, '0', 1], ['HANGERS', 53, '3', 1],
  ['BACKGROUND', 77, '0', 0, '+'], ['BENCHMARK', 72, '1', 0], ['SPRINKLER S...', 76, '0', 0, '+'],
];
const Branch = ({ i, depth, box }) => {
  const w = depth ? 32 : 17;
  const last = i === 9 ? 8 : 17;
  return (
    <Tree width={w} height="17" viewBox={`0 0 ${w} 17`} shapeRendering="crispEdges">
      <path d={`M7.500 ${i === 0 ? 8 : 0}V${i === 12 ? 8 : 17}${depth ? '' : 'M8 8.500h6'}`} stroke="#909090" strokeDasharray="1 1" />
      {depth === 1 && <path d={`M22.500 0V${last}M23 8.500h6`} stroke="#909090" strokeDasharray="1 1" />}
      {box && <path d="M3.500 4.500h8v8h-8z" fill="#fff" stroke="#8c8c8c" />}
      {box && <path d={box === '+' ? 'M5 8.500h5M7.500 6v5' : 'M5 8.500h5'} stroke="#000" />}
    </Tree>
  );
};
const Tabs = styled.div`
  display: flex;
  gap: 8px;
  padding: 1px 0 0 4px;
  color: #fff;
  height: 22px;
  align-items: center;
`;
const Tab = styled.div`
  height: 20px;
  padding: 2px 2px 0 4px;
  width: 25px;
  margin-right: 1px;
  background: linear-gradient(#d6dade, #fff);
  border-radius: 0 0 4px 4px;
  color: #000;
`;
const SymbolRow = styled.div`
  height: 17px;
  display: flex;
  align-items: center;
  padding-left: 2px;
  line-height: 16px;
`;
const SymName = styled.div`width: 86px; padding-left: 2px;`;
const SymCount = styled.div`width: 50px;`;
const SymIcon = () => (
  <Svg width="16" height="16" viewBox="0 0 16 16" shapeRendering="crispEdges">
    <rect x="0.500" y="0.500" width="15" height="15" rx="2" fill="#00f000" stroke="#00a000" />
    <path d="M2 3h3v3H2zM7 2h3v2H7zM12 2h2v3h-2zM2 9h2v4H2zM6 8h3v5H6zM11 8h3v5h-3z" fill="#fff" />
  </Svg>
);
const Preview = styled.div`height: 96px; background: #595959;`;

/* ---------- parts picker ---------- */
const Picker = styled.div`
  height: 763px;
  padding: 10px 10px 0;
  background: #1a2136;
  color: #fff;
`;
const BtnRow = styled.div`
  height: 40px;
  display: flex;
  padding-left: 5px;
`;
const Btn = styled.div`
  width: ${(p) => p.$w}px;
  height: 32px;
  border-radius: 3px;
  background: #068bee;
  display: flex;
  align-items: center;
  justify-content: center;
  font-size: ${(p) => p.$fs}px;
  font-weight: 600;
  margin-left: ${(p) => p.$ml ?? 0}px;
`;
const Rule = styled.div`
  width: 5px;
  height: 30px;
  margin: 1px 0 0 20px;
  border: solid #3d4657;
  border-width: 0 1px;
`;
const Cats = styled.div`
  height: ${(p) => p.$h}px;
  display: flex;
  align-items: center;
  padding-left: 11px;
  gap: 24px;
  color: #aab8d8;
  font-size: 12.5px;
  font-weight: 600;
`;
const CatOn = styled.div`
  align-self: stretch;
  width: 83px;
  margin: 0 -10px 0 -11px;
  display: flex;
  align-items: center;
  justify-content: center;
  background: #020307;
  border: 1px solid #22293a;
  border-radius: 3px 3px 0 0;
  color: #fff;
`;
const Bright = styled(Fit)`color: #fff;`;
const TwoLines = styled.div`
  padding: 11px 0 0 11px;
  height: 56px;
  display: flex;
  flex-direction: column;
  gap: 3px;
  color: #aab8d8;
  font-size: 12.5px;
  font-weight: 600;
`;
const Results = styled.div`
  height: 413px;
  background: #020307;
  box-shadow: 0 0 6px 1px #222c48;
  padding: 10px 10px 0;
  display: grid;
  grid-template-columns: 200px 36px;
`;
const FilterHead = styled.div`
  height: 19px;
  display: flex;
  justify-content: space-between;
  align-items: center;
  padding-right: 10px;
  font-size: 12.5px;
  font-weight: 600;
`;
const ResetBtn = styled.div`
  width: 45px;
  height: 19px;
  border-radius: 3px;
  background: #068bee;
  display: flex;
  justify-content: center;
  font-size: 13px;
`;
const SearchBox = styled.div`
  width: 190px;
  height: 31px;
  margin: 15px 0 10px;
  padding: 0 11px;
  display: flex;
  align-items: center;
  border-radius: 2px;
  border: 1px solid #c3d4f6;
  background: #fff;
  color: #a5a5a5;
  font-size: 13px;
`;
const FilterList = styled.div`
  height: 261px;
  border: solid #33417a;
  border-width: 1px 0;
  display: flex;
  overflow: hidden;
`;
const Facets = styled.div`width: 183px;`;
const Facet = styled.div`
  height: ${(p) => p.$h ?? 35}px;
  display: flex;
  align-items: center;
  justify-content: space-between;
  padding-right: 11px;
  color: #7396bd;
  font-size: 10.5px;
  font-weight: 600;
`;
const CheckRow = styled.label`
  height: ${(p) => p.$h ?? 26.4}px;
  display: flex;
  align-items: center;
  font-size: 12.5px;
  color: ${(p) => p.$c ?? '#fff'};
`;
const Box = styled.span`
  width: 13px;
  height: 13px;
  flex: none;
  margin: 0 8px 4px 0;
  background: #fff;
  border: 1px solid #777;
  svg { margin: 1px; }
`;
const Count = styled.span`
  margin: 1px 0 0 5px;
  height: 12px;
  padding: 0 4px;
  border-radius: 6px;
  background: #28587c;
  font: bold 10px/12px ${UI};
`;
const VScroll = styled.div`
  width: 17px;
  background: #f0f0f0;
  display: flex;
  flex-direction: column;
  align-items: center;
  padding-top: 17px;
`;
const VThumb = styled.div`
  width: 15px;
  height: 100px;
  background: #cdcdcd;
  margin: 8px 0 99px;
`;
const Side = styled.div`
  height: 393px;
  border: 1px solid #26345f;
  border-right: 0;
  border-radius: 4px 0 0 4px;
  background: #1a2136;
  padding-top: 10px;
  display: flex;
  flex-direction: column;
  align-items: flex-end;
  overflow: hidden;
`;
const SideField = styled.div`
  width: 10px;
  height: 31px;
  flex: none;
  background: #fff;
  border-radius: 2px 0 0 2px;
  margin-bottom: 74px;
`;
const Card = styled.div`
  width: 25px;
  height: 74px;
  flex: none;
  padding: 38px 0 0 5px;
  background: #232c4b;
  border-bottom: 2px solid #33406b;
  margin-bottom: 26px;
`;
const Thumb = styled.div`
  width: 20px;
  height: 25px;
  border: 4px solid #e4eadd;
  border-right: 0;
  background: linear-gradient(#222, #555);
`;
const SideCheck = styled.div`
  width: 13px;
  height: 13px;
  flex: none;
  margin: 0 1px 53px 0;
  background: #fff;
  border: 1px solid #777;
`;

/* ---------- drawing document ---------- */
const Doc = styled.section`
  width: 798px;
  flex: none;
  display: flex;
  flex-direction: column;
  background: #535353;
  border-left: 1px solid #a8a8a8;
`;
const DocTabs = styled.div`
  height: 21px;
  display: flex;
  align-items: flex-end;
  border-top: 1px solid #8f959e;
  color: #fff;
  padding-left: 7px;
`;
const DocTab = styled.div`
  height: 17px;
  margin-right: 14px;
`;
const ActiveDoc = styled.div`
  width: 175px;
  height: 17px;
  margin-left: -5px;
  padding: 0 4px 0 5px;
  display: flex;
  align-items: center;
  justify-content: space-between;
  border-radius: 4px 4px 0 0;
  background: linear-gradient(#fff, #d5d9de);
  color: #000;
  font-weight: bold;
  font-size: 11px;
`;
const TabArrows = styled.div`
  margin: 0 9px 5px auto;
`;
const Frame = styled.div`
  flex: none;
  width: 797px;
  height: 763px;
  border: solid #ededed;
  border-width: 2px;
`;
const Inner = styled.div`
  width: 793px;
  height: 758px;
  padding: 1px 2px 3px 1px;
  border: 1px solid #777;
  background: #8f8f8f;
  box-shadow: inset -3px -3px 0 #f3f3f3;
`;
const Canvas = styled.div`
  display: grid;
  grid-template-columns: 768px 18px;
  grid-template-rows: 715px 17px 18px;
  border: solid #666;
  border-width: 2px 0 0 1px;
`;
const RightScroll = styled.div`
  background: #f0f0f0;
  padding: 395px 0 0 8px;
  &::after { content: ''; display: block; width: 2px; height: 17px; background: #868686; }
`;
const BottomScroll = styled.div`
  grid-column: 1 / 3;
  background: #f0f0f0;
  padding: 8px 0 0 175px;
  &::after { content: ''; display: block; width: 16px; height: 2px; background: #868686; }
`;
const SheetBar = styled.div`
  grid-column: 1 / 3;
  display: flex;
  align-items: flex-start;
  padding: 1px 0 0 1px;
  background: linear-gradient(#4b4b4b, #6e6e6e 20%, #7a7a7a);
`;
const NavBtn = styled.div`
  width: 13px;
  height: 13px;
  margin: 2px 3px 0 0;
  background: #e9e9e9;
`;
const SheetTab = styled.div`
  height: 16px;
  width: ${(p) => p.$w}px;
  margin-left: ${(p) => p.$ml}px;
  padding-left: ${(p) => p.$pad}px;
  background: ${(p) => (p.$on ? 'linear-gradient(#f5f8fa, #fff)' : 'linear-gradient(#c8ccd4, #e4e7ec)')};
  clip-path: polygon(${(p) => (p.$on ? '0 0' : '8px 0')}, 100% 0, calc(100% - 14px) 100%, 0 100%);
  font-weight: ${(p) => (p.$on ? 'bold' : 'normal')};
`;

const Scene = () => (
  <Svg width="768" height="715" viewBox="1080 210 768 715">
    <defs>
      <linearGradient id="g1" gradientUnits="userSpaceOnUse" x1="1700" y1="410" x2="1720" y2="444">
        <stop offset="0" stopColor="#242424" /><stop offset=".12" stopColor="#323232" /><stop offset=".4" stopColor="#3f3f3f" /><stop offset=".7" stopColor="#2d2d2d" /><stop offset="1" stopColor="#080808" />
      </linearGradient>
      <linearGradient id="g2" gradientUnits="userSpaceOnUse" x1="1645" y1="578" x2="1627" y2="610">
        <stop offset="0" stopColor="#252525" /><stop offset=".4" stopColor="#4a4a4a" /><stop offset="1" stopColor="#252525" />
      </linearGradient>
      <linearGradient id="g3"><stop offset="0" stopColor="#4b4b4b" /><stop offset=".35" stopColor="#757575" /><stop offset=".7" stopColor="#606060" /><stop offset="1" stopColor="#303030" /></linearGradient>
      <linearGradient id="g4"><stop offset="0" stopColor="#004f00" /><stop offset=".35" stopColor="#007300" /><stop offset=".7" stopColor="#005c00" /><stop offset="1" stopColor="#002c00" /></linearGradient>
      <linearGradient id="g5"><stop offset="0" stopColor="#d66800" /><stop offset=".4" stopColor="#ff9412" /><stop offset=".75" stopColor="#f58200" /><stop offset="1" stopColor="#b55500" /></linearGradient>
      <linearGradient id="g6" gradientUnits="userSpaceOnUse" x1="350" y1="985" x2="400" y2="1075">
        <stop offset="0" stopColor="#e06c00" /><stop offset=".35" stopColor="#ff8400" /><stop offset="1" stopColor="#a84c00" />
      </linearGradient>
      <linearGradient id="g9" gradientUnits="userSpaceOnUse" x1="235" y1="1060" x2="295" y2="1160">
        <stop offset="0" stopColor="#2a2a2a" /><stop offset=".35" stopColor="#404040" /><stop offset="1" stopColor="#141414" />
      </linearGradient>
      <radialGradient id="g7" cx=".38" cy=".45" r=".62"><stop offset="0" stopColor="#ff6058" /><stop offset=".4" stopColor="#f51212" /><stop offset=".8" stopColor="#b80404" /><stop offset="1" stopColor="#650000" /></radialGradient>
      <radialGradient id="g8" cx=".6" cy=".35" r=".8"><stop offset="0" stopColor="#ff980f" /><stop offset=".6" stopColor="#fa8600" /><stop offset="1" stopColor="#c86100" /></radialGradient>
    </defs>
    <rect x="1080" y="210" width="768" height="715" fill="#5a5a5a" />
    <g transform="translate(1400 600) scale(.33333)" stroke="#505050" strokeWidth="2.500" fill="none">
      <path d="M243 775L385 693M456 652L600 570M668 530L812 447M882 405L1000 338M1110 338L1238 410M1308 451L1344 470M300 816L443 898M514 938L578 975" />
    </g>
    <path d="M1766 289.300L1781.700 298.300 1848 260V242L1774 284z" fill="#591517" />
    <path d="M1774 210h74v32L1774 284z" fill="#3b1717" />
    <path d="M1774 284L1848 242v9L1774 293z" fill="#3c0406" />
    <path d="M1774 210v82" stroke="#6c2524" />
    <path d="M1553 494L1848 325.500V368L1573 525z" fill="url(#g1)" />
    <g transform="translate(1400 185) scale(.33333)">
      {/* run of the tee */}
      <path d="M310 1026L445 948l60 90-90 60h-30l-50 30z" fill="url(#g6)" />
      {/* far coupling */}
      <path d="M400 938l14-6 12 4q24-20 52-8 34 20 44 66v58l-22-8-12-34q-14-44-44-62l-30 20-14-8z" fill="#fb8203" />
      <path d="M440 946q42 16 56 80" fill="none" stroke="#b75a00" strokeWidth="4" />
      <path d="M496 1004l14 6 14-16v40l-20-10z" fill="#d06a00" />
      {/* left coupling */}
      <path d="M246 1034l14-8q30-18 62-10 34 20 42 70l8 4v36l-28 14q-14 14-36 8l20-20q14-60-30-90-20-8-36 4l-16 10z" fill="#fb8203" />
      <path d="M302 1022q44 20 42 90" fill="none" stroke="#b75a00" strokeWidth="4" />
      {/* pipe stub */}
      <path d="M196 1088L278 1041q36-8 52 34 10 30 4 52L250 1176z" fill="url(#g9)" />
      <path d="M340 1098l16 8 14-20v42l-16 10-14-2z" fill="#d46c00" />
      {/* branch outlet */}
      <path d="M385 996q40-6 76 22l24 10-46 70-54-10z" fill="#ff9200" />
      <path d="M385 1104l50-30v-50l-50-28z" fill="#ff8f04" />
      <path d="M385 1104h20l20-30-40-40z" fill="#dd7200" />
      {/* branch coupling */}
      <path d="M524 1050v-14l-30-22q-34 0-58 42l-8 36-28-4v44l12 6 18-4q16 18 40 12l-14-8-20-22-4-40 20-36 36-10z" fill="#f98204" />
      <path d="M428 1100q4-56 56-78" fill="none" stroke="#b75a00" strokeWidth="4" />
      <path d="M400 1090l14 6 14-8v42l-14 8-14-4z" fill="#d46c00" />
    </g>
    <path d="M1561 531q2-1 4 0L1727 624 1708 656 1549 566q-7-13 1-25z" fill="url(#g2)" />
    <g transform="translate(1400 185) scale(.33333)">
      <path d="M123 1100l26-12q26-14 48-6 34 18 46 70l8 4v46l-28 8q-12 18-36 8-46-20-58-76l-6 8z" fill="#fb8203" />
      <ellipse cx="182" cy="1160" rx="46" ry="56" transform="rotate(-24 182 1160)" fill="#c66400" />
      <ellipse cx="178" cy="1158" rx="38" ry="52" transform="rotate(-24 178 1158)" fill="#4444fb" />
      <path d="M162 1138l26-12 25 12v30l-25 12-26-16z" fill="#4f4e63" /><path d="M162 1138l26-12 25 12-25 10z" fill="#77759d" /><path d="M188 1148l25-10v30l-25 12z" fill="#39394a" />
      <path d="M222 1166l28-8v42l-28 8z" fill="#c86600" /><path d="M124 1102l12-4v50l-12-10z" fill="#c86600" />
    </g>
    <g transform="translate(1400 600) scale(.33333)">
      <path d="M953 308Q915 270 940 230 965 206 1010 206M1100 200q18 2 28 10M1158 400q36 30 16 66-40 50-120 48-50-2-70-16" fill="none" stroke="#777" strokeWidth="3" />
      <rect x="1000" y="495" width="110" height="482" fill="url(#g4)" />
      <path d="M984 430q2-12 16-14h110l20 4v18l-4 16q-4 34-36 48-50 8-76-2l-34-22z" fill="#f88104" />
      <rect x="1000" y="290" width="110" height="182" fill="url(#g3)" />
      <path d="M1000 450v12q50 24 110 0v-14z" fill="url(#g3)" />
      <path d="M980 460l14-4 34 16-6 36-42-26z" fill="#df7300" /><path d="M1024 476q60 8 100-28" fill="none" stroke="#b65b00" strokeWidth="3" />
      <path d="M986 222l18-8h104l22 4v18l-4 16q-8 36-38 48-44 10-70-2l-38-24 6-22z" fill="#f88104" />
      <path d="M928 148q10-62 66-76 26-4 44 14l16 4v30L980 206h-16l-6-10-30-4z" fill="#f58104" />
      <path d="M962 154q4-48 52-58 70 12 92 50 6 14 4 40v70q-60 36-110 0v-52q-32-14-38-50z" fill="url(#g8)" />
      <path d="M1000 204h110v54q-50 26-110 0z" fill="url(#g5)" />
      <path d="M996 98q36-6 66 16 40 24 44 54v38h-104q-36-16-38-46 4-42 32-62z" fill="#ff9206" opacity=".75" />
      <path d="M978 260l12-8 36 20-6 32-40-22z" fill="#df7300" /><path d="M1024 276q60 8 100-30" fill="none" stroke="#b65b00" strokeWidth="3" />
      <path d="M934 146l22 10v42l-26-6z" fill="#cd6800" /><path d="M956 154q8-54 52-64" fill="none" stroke="#b65b00" strokeWidth="4" />
      <path d="M1182 651q38 6 47 62 2 48-32 68-40 14-76 8-28-16-16-56 18-50 40-66 16-14 37-16z" fill="url(#g7)" />
      <path d="M1090 682l12-4 10 10-8 6z" fill="#00811b" /><path d="M1106 690l10 0 8 8-8 6z" fill="#e00" />
      <path d="M1300 838l44-32v62l-28 14z" fill="#e4e4e4" />
      <path d="M1110 915l32-4 16-26 50-6 30-40 50-14q34 4 46 50l10 8v66l-14 10-36-16v-20l-50 20-2 36h-130z" fill="#f58104" />
      <path d="M1110 944q20-10 32 0 14 16 14 32h-46zM1156 910q20-8 34 6 22 24 18 44l-16 6q-2-40-36-56zM1314 950h30v26h-30z" fill="#006d00" />
      <path d="M1248 930l46-16v20l24 24v20h-70z" fill="#5a5a5a" />
      <path d="M1294 930l50 6v14l-30 0z" fill="#f58104" />
      <path d="M1222 884l64-34-50 52z" fill="#ffd057" /><path d="M1240 906l42-48 22 14-6 20-36 20z" fill="#8b4500" />
      <path d="M1140 912q42 20 48 64M1206 882q34 24 36 64M1304 832q34 20 34 60" fill="none" stroke="#b65b00" strokeWidth="4" />
      <path d="M1220 940h28v36h-28z" fill="#c96700" />
    </g>
  </Svg>
);

/* ---------- right-hand toolbars ---------- */
const RightRail = styled.aside`
  width: 48px;
  margin-left: -4px;
  flex: none;
  background: #535353;
`;
const VBar = styled.div`
  height: ${(p) => p.$h}px;
  display: flex;
  flex-direction: column;
  align-items: center;
  background: linear-gradient(90deg, #ced1d6, #c4c8ce 45%, #929aa5);
  border-radius: 3px 3px 0 0;
`;
const VGrip = styled.div`
  width: 31px;
  height: 3px;
  margin: ${(p) => p.$top ?? 4}px 0 4px -1px;
  flex: none;
  background: repeating-linear-gradient(90deg, #3d434c 0 2px, transparent 2px 4px);
`;
const VCell = styled.div`
  height: 42px;
  width: 44px;
  flex: none;
  display: flex;
  align-items: center;
  justify-content: center;
`;
const VText = styled.div`
  writing-mode: vertical-rl;
  font-size: 12px;
  width: ${(p) => (p.$on ? 43 : 20)}px;
  height: ${(p) => p.$h}px;
  flex: none;
  display: flex;
  justify-content: center;
  align-items: center;
  ${(p) => p.$on && css`
    align-self: flex-start;
    margin-left: 2px;
    border: 1px solid #d7a468;
    background: linear-gradient(#fcd6b0, #fdc48a 30%, #feac50 34%, #fdc069 60%, #ffe78e);
  `}
`;
const VSep = styled.div`
  width: 28px;
  height: 2px;
  margin: 3px 0;
  flex: none;
  background: linear-gradient(#7d848e 50%, #fff 50%);
`;
const VMore = styled.div`
  height: ${(p) => p.$h}px;
  display: flex;
  align-items: center;
  justify-content: flex-end;
  padding-right: 3px;
  background: linear-gradient(90deg, #4b515b, #7e858f 55%, #a3a9b4);
`;
const VMoreCap = ({ h }) => (
  <VMore $h={h}><Svg width="14" height="12" viewBox="0 0 14 12" shapeRendering="crispEdges"><path d="M2 1v10" stroke="#fff" strokeWidth="2" /><path d="M7 1v10l6-5z" fill="#444" stroke="#fff" /></Svg></VMore>
);

const StatusBar = styled.footer`
  display: flex;
  align-items: center;
  padding: 2px 1px 0 4px;
  color: #fff;
  width: 1872px;
  background: linear-gradient(#42454f, #3a3d47 42%, #2b2b2b 46%, #2f2f2f);
`;
const Stat = styled.div`
  display: flex;
  height: 15px;
  align-items: center;
  border: solid #6a6a6a;
  border-width: 0 1px;
  padding-left: 3px;
  width: ${(p) => p.$w}px;
  margin-right: ${(p) => p.$mr ?? 0}px;
`;
const MENUS = [['File', 18], ['Edit', 20], ['Select', 30], ['Snaps', 31], ['Tools', 28], ['Actions', 38], ['Commands', 57], ['Auto Draw', 55], ['Roof Planes', 61], ['Wizards', 41], ['Hydraulics', 53], ['Finish', 31], ['Alerts', 29], ['Listing', 34], ['Parts Database', 76], ['AutoPREP', 50], ['Settings', 42], ['View', 25], ['Window', 44], ['Help', 24]];

const Check = ({ label, w, n, on, h, c }) => (
  <CheckRow $h={h} $c={c}>
    <Box>{on && <Svg width="9" height="9" viewBox="0 0 9 9"><path d="M1 4.500l2.500 3L8 1" fill="none" stroke="#000" strokeWidth="2" /></Svg>}</Box>
    <Fit w={w}>{label}</Fit>{n && <Count>{n}</Count>}
  </CheckRow>
);

export default function App() {
  return (
    <>
      <Global />
      <Shell>
        <TitleBar>
          <Svg className="logo" width="16" height="16" viewBox="0 0 16 16"><rect width="16" height="16" rx="2" fill="#3a4256" /><path d="M3 12L8 3h2v9M5 9h5" fill="none" stroke="#7eaaf5" strokeWidth="2.500" /><path d="M12 6v6q-2 3-5 2" fill="none" stroke="#bbb" strokeWidth="2" /></Svg>
          <Fit w={914}>{'AutoSPRINK® 2023 Platinum - C:\\Users\\B.Chambers\\Desktop\\AutomationTesting\\SmokeTesting\\SPRINK Smoke Testing Files\\Simple Threaded System.cad - [Simple Threade]'}</Fit>
          <Spacer />
          <WinButtons>
            <Svg width="10" height="10" viewBox="0 0 10 10"><path d="M0 5.500h10" stroke="#111" /></Svg>
            <Svg width="10" height="10" viewBox="0 0 10 10"><path d="M2.500 2V.5h5q2 0 2 2v5H8M.5 2.500h7v7h-7z" fill="none" stroke="#111" /></Svg>
            <Svg width="11" height="11" viewBox="0 0 11 11"><path d="M.5.5l10 10M10.500.5l-10 10" stroke="#111" /></Svg>
          </WinButtons>
        </TitleBar>
        <MenuBar>
          <Svg width="16" height="16" viewBox="0 0 16 16" shapeRendering="crispEdges"><path d="M1 1h11l3 3v11H1z" fill="#fff" stroke="#000" /><path d="M0 1h11v4H0z" fill="#ff0" /><path d="M2 2v2M5 2v2M8 2v2" stroke="#000" /><path d="M1 6l7 8H1z" fill="#0d0" stroke="#060" /><path d="M8 8h4v3H8z" fill="#e0e" /></Svg>
          {MENUS.map(([m, w]) => <Fit key={m} w={w}>{m}</Fit>)}
          <Spacer />
          <MdiButtons>
            <Svg width="8" height="10" viewBox="0 0 8 10"><path d="M0 8h7" stroke="#98a0ab" strokeWidth="2" /></Svg>
            <Svg width="10" height="10" viewBox="0 0 10 10"><path d="M2.500 3V1.500h7V6H8M.5 3.500h6v4h-6z" fill="none" stroke="#98a0ab" strokeWidth="1.300" /></Svg>
            <Svg width="9" height="10" viewBox="0 0 9 10"><path d="M1 1l7 8M8 1L1 9" stroke="#98a0ab" strokeWidth="2" /></Svg>
          </MdiButtons>
        </MenuBar>
        <Rows>
          {[ROW1, ROW2, ROW3].map((row, i) => <Row key={i}>{row.map(([w, items], j) => <Toolbar key={j} w={w} items={items} />)}</Row>)}
        </Rows>

        <Middle>
          <Dock $w={221}>
            <Title name="Layers" w={30} />
            <LayersBox>
              <MiniBar $pad={1}><IconCell><Icon name="layNew" /></IconCell><IconCell><Icon name="layDel" /></IconCell><MiniSep /><IconCell><Icon name="layE" /></IconCell><IconCell><Icon name="props" /></IconCell><MiniSep /><IconCell><Icon name="checks" /></IconCell></MiniBar>
              <Header>
                <Col $w={100}><Fit w={29}>Name</Fit></Col><Col $w={20}>V.</Col><Col $w={20}>S.</Col><Col $w={20}>A.</Col><Col $w={20}>C.</Col><Col $w={60}><Fit w={30}>Eleme</Fit></Col>
              </Header>
              <White>
                {LAYERS.map(([name, w, n, depth, box], i) => (
                  <LayerRow key={i} $indent={depth ? 32 : 17} $sel={i === 6}>
                    <Branch i={i} depth={depth} box={box} />
                    <Fit w={w}>{name}</Fit>
                    <Eye /><Magnet />
                    <Swatch $c={i === 7 ? '#00f' : '#000'} />
                    <Fit w={n.length * 6.2}>{n}</Fit>
                  </LayerRow>
                ))}
              </White>
              <HScroll $x={17} $w={153} $h={17} />
            </LayersBox>
            <Tabs><Tab><Fit w={19}>La...</Fit></Tab>{[['De...', 22], ['De...', 22], ['Ne...', 22], ['Te...', 21], ['Tra...', 23], ['Fa...', 21]].map(([t, w], i) => <Fit key={i} w={w}>{t}</Fit>)}</Tabs>
          </Dock>

          <Dock $w={197}>
            <Title name="Alerts" w={28} />
            <MiniBar><IconCell><Icon name="refresh" size={30} /></IconCell><IconCell><Icon name="xgrey" size={30} /></IconCell><IconCell><Icon name="xa" size={30} /></IconCell><IconCell><Icon name="xc" size={30} /></IconCell><IconCell><Icon name="propsGrey" size={30} /></IconCell></MiniBar>
            <Header><Col $w={84}><Fit w={43}>Location</Fit></Col><Col $w={42}><Fit w={28}>Inte...</Fit></Col><Col $w={29}><Fit w={15}>C...</Fit></Col><Col $w={60}><Fit w={32}>Status</Fit></Col></Header>
            <White $h={541} /><HScroll $x={17} $w={161} /><White />
          </Dock>

          <Dock $w={192}>
            <Title name="Symbols" w={42} />
            <Header><Col $w={100}><Fit w={29}>Name</Fit></Col><Col $w={50}><Fit w={32}>Count</Fit></Col><Col $w={60}><Fit w={36}>Eleme..</Fit></Col></Header>
            <White $h={633}>
              {[['Default Sym...', 73, '2'], ['Long-Eared ...', 73, '6']].map(([s, w, n]) => (
                <SymbolRow key={s}><SymIcon /><SymName><Fit w={w}>{s}</Fit></SymName><SymCount>0</SymCount>{n}</SymbolRow>
              ))}
            </White>
            <HScroll $x={17} $w={152} />
            <Preview>
              <Svg width="192" height="96" viewBox="0 0 192 96"><path d="M9 32.500h65q3-22 22-22t23 22h65M9 64.500h65q3 22 22 22t23-22h65" fill="none" stroke="#000" strokeWidth="2.600" /></Svg>
            </Preview>
          </Dock>

          <Dock $w={168}>
            <Title name="Select" w={30} />
            <MiniBar><IconCell><Icon name="bulb1" size={30} /></IconCell><IconCell><Icon name="bulb2" size={30} /></IconCell><IconCell><Icon name="funG" size={28} /></IconCell><IconCell><Icon name="funY" size={28} /></IconCell></MiniBar>
            <Header><Col $w={134}><Fit w={41}>Element</Fit></Col></Header>
            <White />
          </Dock>

          <Dock $w={276}>
            <Title name="Parts Picker" w={58} />
            <Picker>
              <BtnRow><Btn $w={127} $fs={21}><Fit w={107}>Download</Fit></Btn><Rule /></BtnRow>
              <BtnRow><Btn $w={100} $fs={21}><Fit w={79}>Profiles</Fit></Btn><Rule /><Btn $w={98} $fs={17.5} $ml={28}><Fit w={70}>Support</Fit></Btn></BtnRow>
              <Cats $h={41}><Bright w={64}>New Parts</Bright><CatOn><Fit w={62}>Couplings</Fit></CatOn><Fit w={46}>Fittings</Fit></Cats>
              <Cats $h={38}><Fit w={82}>Hanger Parts</Fit><Fit w={62}>Hardware</Fit></Cats>
              <Cats $h={38}><Fit w={48}>Nozzles</Fit><Fit w={27}>Pipe</Fit><Fit w={77}>Pipe Outlets</Fit></Cats>
              <Cats $h={39}><Fit w={63}>Sprinklers</Fit><Fit w={83}>Sway Bracing</Fit><Fit w={29}>Trim</Fit></Cats>
              <Cats $h={38}><Fit w={40}>Valves</Fit><Fit w={31}>FDCs</Fit></Cats>
              <TwoLines><Fit top w={163}>{'Flexible Sprinkler Hoses &'}</Fit><Fit top w={73}>Accessories</Fit></TwoLines>
              <Results>
                <div>
                  <FilterHead><Fit w={42}>Filters</Fit><ResetBtn><Fit w={38}>Reset</Fit></ResetBtn></FilterHead>
                  <SearchBox><Fit w={95}>Search by Text</Fit></SearchBox>
                  <FilterList>
                    <Facets>
                      <Facet $h={33}><Fit w={44}>REGION</Fit>+</Facet>
                      <Facet><Fit w={42}>ORIGIN</Fit>+</Facet>
                      <Facet><Fit w={93}>MANUFACTURER</Fit>−</Facet>
                      <Check label="All" w={14} on h={20} />
                      <Check label="Anvil" w={27} n="26" h={33} />
                      <Check label="Argco" w={32} n="6" h={20} />
                      <Check label="Generic" w={44} n="11" h={32} />
                      <Check label="Reliable" w={44} n="10" h={20} />
                      <Check label="Shurjoint" w={52} n="12" h={32} />
                    </Facets>
                    <VScroll>
                      <Svg width="11" height="9" viewBox="0 0 11 9"><path d="M1 7l4.500-4.500L10 7" fill="none" stroke="#555" strokeWidth="2.500" /></Svg>
                      <VThumb />
                      <Svg width="11" height="9" viewBox="0 0 11 9"><path d="M1 2l4.500 4.500L10 2" fill="none" stroke="#555" strokeWidth="2.500" /></Svg>
                    </VScroll>
                  </FilterList>
                  <Check label="Metric Display" w={86} h={35} c="#3ea6f5" />
                  <Check label="Use Staging" w={71} h={18} c="#3ea6f5" />
                </div>
                <Side><SideField /><Card><Thumb /></Card><SideCheck /><SideCheck /><SideCheck /></Side>
              </Results>
            </Picker>
          </Dock>

          <Doc>
            <DocTabs>
              <DocTab><Fit w={52}>Start Page</Fit></DocTab><DocTab><Fit w={49}>Drawing1</Fit></DocTab>
              <ActiveDoc><Fit w={148}>Simple Threaded System.cad</Fit><Svg width="9" height="9" viewBox="0 0 9 9"><path d="M1 1l7 7M8 1L1 8" stroke="#555" strokeWidth="1.300" /></Svg></ActiveDoc>
              <TabArrows><Svg width="24" height="10" viewBox="0 0 24 10"><path d="M4.500 1v7L1 4.500zM19 1v7l3.500-3.500z" fill="none" stroke="#6e6e6e" /></Svg></TabArrows>
            </DocTabs>
            <Frame><Inner><Canvas>
              <Scene />
              <RightScroll />
              <BottomScroll />
              <SheetBar>
                {['M2.500 3v7M9 3v7L4 6.500z', 'M9 3v7L4 6.500z', 'M4 3v7l5-3.500z', 'M3 3v7l5-3.500zM10 3v7'].map((d) => <NavBtn key={d}><Svg width="13" height="13" viewBox="0 0 13 13"><path d={d} fill="#333" stroke="#333" strokeWidth=".8" /></Svg></NavBtn>)}
                <SheetTab $on $w={60} $ml={4} $pad={7}><Fit w={39}>*Model</Fit></SheetTab>
                <SheetTab $w={59} $ml={-9} $pad={8}><Fit w={38}>Sheet 1</Fit></SheetTab>
              </SheetBar>
            </Canvas></Inner></Frame>
          </Doc>

          <RightRail>
            <VBar $h={214}><VGrip /><VText $h={73}><Fit vertical w={66}>Import DWG</Fit></VText>{['dwg', 'copy', 'boxes'].map((n) => <VCell key={n}><Icon name={n} /></VCell>)}</VBar>
            <VMoreCap h={20} />
            <VBar $h={364}><VGrip />{['v1', 'v2', '|', 'v3', 'v4', 'v5', '|', 'v6', 'v7', 'v8'].map((n, i) => (n === '|' ? <VSep key={i} /> : <VCell key={i}><Icon name={n} /></VCell>))}</VBar>
            <VMoreCap h={20} />
            <VBar $h={115}><VGrip /><VText $h={38}><Fit vertical w={30}>GLSL</Fit></VText><VText $on $h={63}><Fit vertical w={54}>OpenGL®</Fit></VText></VBar>
            <VMoreCap h={21} />
          </RightRail>
        </Middle>

        <StatusBar>
          <Fit w={183}>Increases the camera magnification.</Fit>
          <Spacer />
          <Stat $w={58} $mr={5}><Fit w={51}>1 selected</Fit></Stat>
          <Stat $w={58} $mr={5}><Fit w={52}>{"Elev1: 0'-0"}</Fit></Stat>
          <Stat $w={26}><Fit w={20}>Cap</Fit></Stat>
          <Stat $w={34}><Fit w={27}># Off</Fit></Stat>
          <Stat $w={29}><Fit w={25}>Foot</Fit></Stat>
        </StatusBar>
        <Row>{BOTTOM.map(([w, items], j) => <Toolbar key={j} w={w} items={items} />)}</Row>
      </Shell>
    </>
  );
}
